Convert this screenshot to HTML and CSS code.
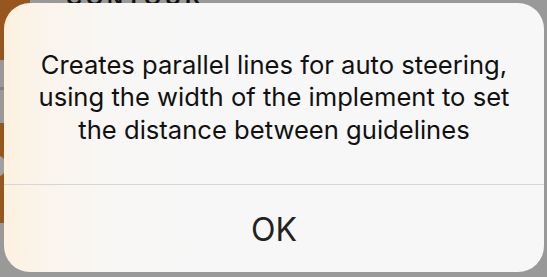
FILE: index.html
```html
<!DOCTYPE html>
<html>
<head>
<meta charset="utf-8">
<link rel="stylesheet" href="styles.css">
</head>
<body>
<div class="backdrop">
  <div class="side">
    <div class="brown-top"></div>
    <div class="rule"></div>
    <div class="brown-mid"><span class="knob"></span></div>
  </div>
  <div class="title">CONTOUR</div>
</div>
<div class="alert">
  <div class="message">Creates parallel lines for auto steering,<br>using the width of the implement to set<br>the distance between guidelines</div>
  <div class="actions"><button class="ok">OK</button></div>
</div>
</body>
</html>
```
FILE: styles.css
```css
html, body {
  margin: 0;
  padding: 0;
}
body {
  width: 547px;
  height: 277px;
  background: #999999;
  position: relative;
  overflow: hidden;
  font-family: "Inter", "Liberation Sans", sans-serif;
}
.backdrop {
  display: flex;
  height: 100%;
}
.side {
  width: 30px;
  display: flex;
  flex-direction: column;
}
.brown-top {
  height: 60px;
  background: #97561d;
}
.rule {
  margin-top: 27px;
  height: 3px;
  width: 5px;
  background: #808080;
}
.brown-mid {
  margin-top: 33px;
  height: 100px;
  width: 5px;
  background: #97561d;
  position: relative;
}
.knob {
  position: absolute;
  left: -8px;
  top: 33px;
  width: 14px;
  height: 20px;
  border-radius: 50%;
  background: #a0a0a0;
}
.title {
  margin-left: 36px;
  margin-top: -12px;
  height: 20px;
  font-family: "Liberation Sans", sans-serif;
  font-weight: bold;
  font-size: 22px;
  line-height: 20px;
  letter-spacing: 4px;
  color: #111;
}
.alert {
  position: absolute;
  left: 4px;
  top: 3px;
  width: 540px;
  height: 269px;
  border-radius: 26px;
  overflow: hidden;
  background: linear-gradient(to right, #fdf1df 0px, #faf4ec 40px, #f8f7f5 110px, #f7f7f7 200px);
  display: flex;
  flex-direction: column;
}
.message {
  height: 182px;
  box-sizing: border-box;
  border-bottom: 1px solid #d6d6d6;
  display: flex;
  align-items: center;
  justify-content: center;
  text-align: center;
  font-size: 25.6px;
  line-height: 32.5px;
  color: #111;
  padding-top: 8px;
}
.actions {
  flex: 1;
  display: flex;
  align-items: center;
  justify-content: center;
}
.ok {
  border: 0;
  background: transparent;
  font-family: "Inter", "Liberation Sans", sans-serif;
  font-size: 32px;
  color: #222;
  padding: 0;
  margin-top: 2px;
}
```
